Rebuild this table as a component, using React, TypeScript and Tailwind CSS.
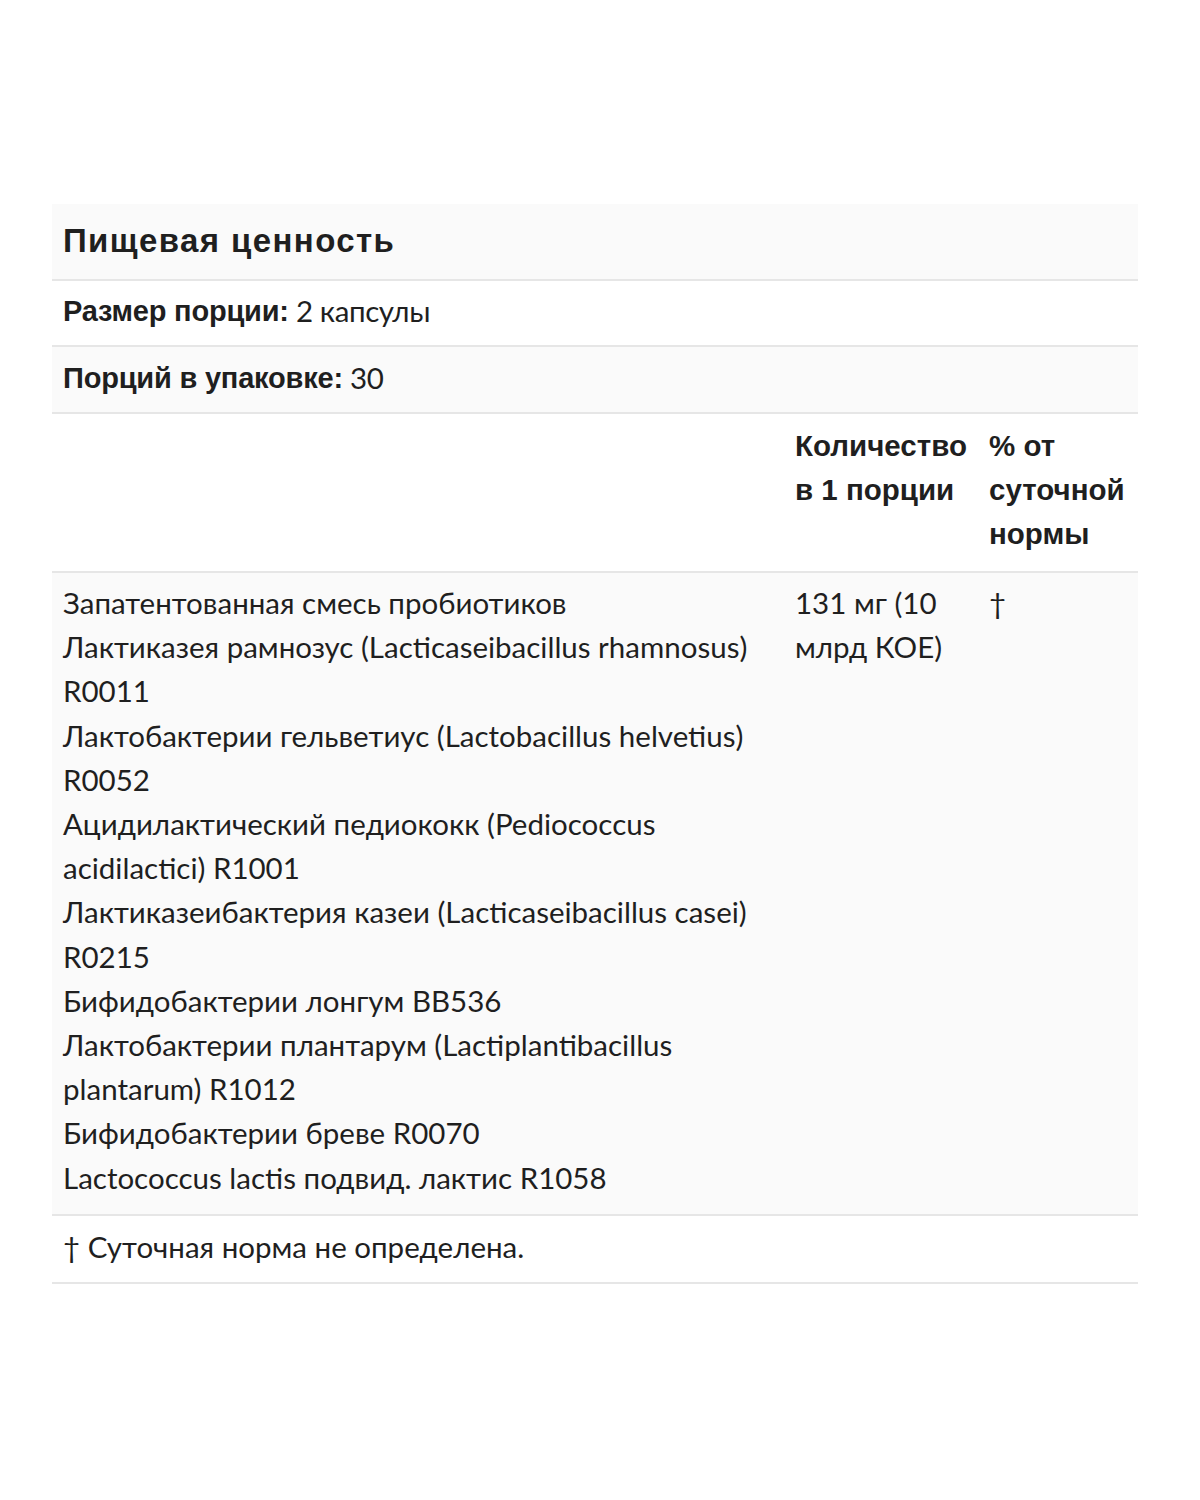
import React from "react";

const lines = [
  "Запатентованная смесь пробиотиков",
  "Лактиказея рамнозус (Lacticaseibacillus rhamnosus)",
  "R0011",
  "Лактобактерии гельветиус (Lactobacillus helvetius)",
  "R0052",
  "Ацидилактический педиококк (Pediococcus",
  "acidilactici) R1001",
  "Лактиказеибактерия казеи (Lacticaseibacillus casei)",
  "R0215",
  "Бифидобактерии лонгум BB536",
  "Лактобактерии плантарум (Lactiplantibacillus",
  "plantarum) R1012",
  "Бифидобактерии бреве R0070",
  "Lactococcus lactis подвид. лактис R1058",
];

const bold = { fontFamily: "'Liberation Sans', Arial, sans-serif" };

export default function App() {
  return (
    <div
      className="w-[1200px] h-[1500px] bg-white text-[#1f1f1f] pt-[204px] px-[52px]"
      style={{ fontFamily: "Lato, 'Noto Sans', sans-serif" }}
    >
      <div className="w-[1086px] text-[29.5px] leading-[44.2px]">
        <div className="bg-[#fafafa] border-b-2 border-[#e6e6e6] h-[77px] flex items-center px-[11px]">
          <span className="font-bold text-[33px] tracking-[1.4px] pb-[1px]" style={bold}>
            Пищевая ценность
          </span>
        </div>
        <div className="bg-white border-b-2 border-[#e6e6e6] h-[66px] flex items-center px-[11px] pb-[3px]">
          <span className="font-bold text-[29px] tracking-[-0.2px]" style={bold}>
            Размер порции:
          </span>
          <span className="tracking-[-0.4px]">&nbsp;2 капсулы</span>
        </div>
        <div className="bg-[#fafafa] border-b-2 border-[#e6e6e6] h-[67px] flex items-center px-[11px] pb-[3px]">
          <span className="font-bold text-[29px] tracking-[-0.2px]" style={bold}>
            Порций в упаковке:
          </span>
          <span className="tracking-[-0.4px]">&nbsp;30</span>
        </div>
        <div className="bg-white border-b-2 border-[#e6e6e6] flex pt-[10px] h-[159px]">
          <div className="w-[732px] px-[11px]"></div>
          <div className="w-[194px] px-[11px] font-bold text-[29.5px]" style={bold}>
            Количество в 1 порции
          </div>
          <div className="w-[160px] px-[11px] font-bold text-[29.5px]" style={bold}>
            % от суточной нормы
          </div>
        </div>
        <div className="bg-[#fafafa] border-b-2 border-[#e6e6e6] flex pt-[8px] h-[643px]">
          <div className="w-[732px] px-[11px]">
            {lines.map((l, i) => (
              <div key={i}>{l}</div>
            ))}
          </div>
          <div className="w-[194px] px-[11px]">131 мг (10 млрд КОЕ)</div>
          <div className="w-[160px] px-[11px]">†</div>
        </div>
        <div className="bg-white border-b-2 border-[#e6e6e6] h-[68px] flex items-center px-[11px] pb-[3px]">
          † Суточная норма не определена.
        </div>
      </div>
    </div>
  );
}
